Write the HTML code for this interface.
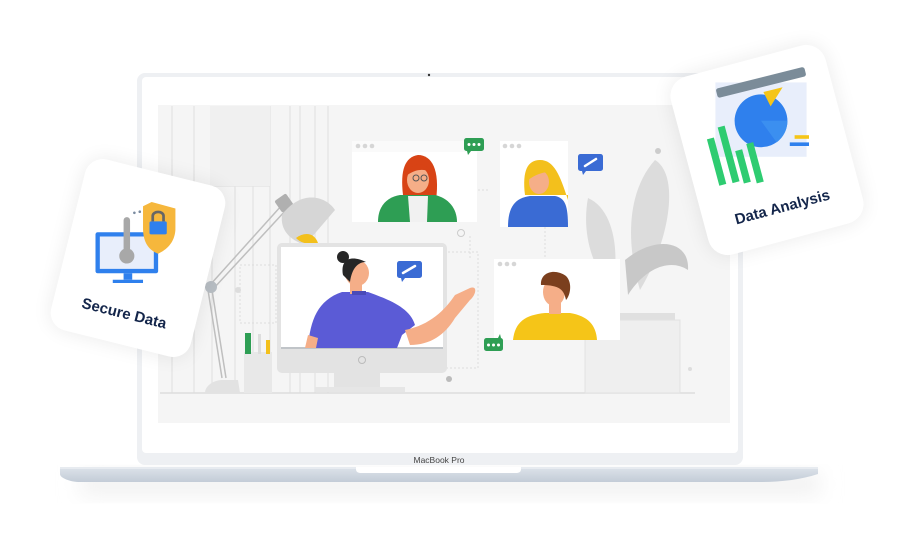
<!DOCTYPE html>
<html><head><meta charset="utf-8"><style>
html,body{margin:0;padding:0;background:#fff;width:902px;height:550px;overflow:hidden}
svg{display:block}
text{font-family:"Liberation Sans",sans-serif}
</style></head><body>
<svg width="902" height="550" viewBox="0 0 902 550" xmlns="http://www.w3.org/2000/svg">
<defs>
<filter id="sh" x="-30%" y="-30%" width="160%" height="160%"><feGaussianBlur stdDeviation="10"/></filter>
<linearGradient id="base" x1="0" y1="0" x2="0" y2="1"><stop offset="0" stop-color="#dde3ea"/><stop offset="1" stop-color="#c3ccd7"/></linearGradient>
</defs>
<rect x="80" y="472" width="740" height="24" fill="#f2f2f2" filter="url(#sh)"/>
<rect x="137" y="73" width="606" height="392" rx="8" fill="#eef0f3"/>
<rect x="142" y="77" width="596" height="376" rx="4" fill="#fff"/>
<circle cx="429" cy="75" r="1.2" fill="#333"/>
<rect x="158" y="105" width="572" height="318" fill="#f5f5f5"/>
<g stroke="#e2e2e2" stroke-width="1.2" fill="none">
<line x1="172" y1="106" x2="172" y2="393"/><line x1="194" y1="106" x2="194" y2="393"/>
<line x1="212" y1="106" x2="212" y2="393"/><line x1="235" y1="106" x2="235" y2="393"/>
<line x1="253" y1="106" x2="253" y2="393"/><line x1="270" y1="106" x2="270" y2="393"/>
<line x1="290" y1="106" x2="290" y2="393"/><line x1="300" y1="106" x2="300" y2="393"/>
<line x1="315" y1="106" x2="315" y2="393"/><line x1="328" y1="106" x2="328" y2="393"/>
<line x1="210" y1="186" x2="270" y2="186"/>
</g>
<rect x="210" y="106" width="60" height="80" fill="#f0f0f0"/>
<line x1="160" y1="393" x2="695" y2="393" stroke="#ddd" stroke-width="1.5"/>
<g stroke="#ddd" stroke-dasharray="2 2" fill="none">
<rect x="412" y="252" width="66" height="116"/>
<rect x="240" y="265" width="36" height="58"/>
<path d="M470 236 V258"/><path d="M545 227 V259"/><path d="M478 190 H490"/>
<path d="M430 175 V145"/>
</g>
<circle cx="461" cy="233" r="3.5" fill="none" stroke="#ccc"/>
<circle cx="658" cy="151" r="3" fill="#ccc"/>
<circle cx="238" cy="290" r="3" fill="#ddd"/>
<circle cx="449" cy="379" r="3" fill="#bbb"/>
<circle cx="592" cy="352" r="2" fill="#ccc"/>
<circle cx="690" cy="369" r="2" fill="#ddd"/>
<g fill="#dcdcdc">
<path d="M655 160 C680 175 670 240 640 290 C625 240 628 190 655 160Z"/>
<path d="M588 198 C615 210 620 255 612 290 C590 265 582 230 588 198Z"/>
<path d="M625 260 C655 235 690 240 688 270 C670 258 645 268 628 295Z" fill="#c8c8c8"/>
</g>
<rect x="620" y="313" width="55" height="8" fill="#e0e0e0"/>
<rect x="585" y="320" width="95" height="73" fill="#efefef" stroke="#e2e2e2"/>
<g stroke="#bfbfbf" stroke-width="1.5" fill="none">
<line x1="210" y1="285" x2="282" y2="205"/><line x1="214" y1="288" x2="286" y2="210"/>
<line x1="208" y1="290" x2="222" y2="378"/><line x1="212" y1="290" x2="226" y2="378"/>
</g>
<circle cx="211" cy="287" r="6" fill="#b8bec4"/>
<rect x="277" y="196" width="14" height="14" rx="2" fill="#b0b0b0" transform="rotate(-35 284 203)"/>
<path d="M282 215 C300 190 325 195 335 210 L305 245 C290 240 280 230 282 215Z" fill="#d6d6d6"/>
<path d="M296 238 C304 232 314 232 318 243 C310 245 302 244 296 238Z" fill="#f3c01c"/>
<path d="M205 393 C205 385 215 380 222 380 L238 380 L240 393Z" fill="#e2e2e2"/>
<rect x="244" y="352" width="28" height="41" fill="#e8e8e8"/>
<rect x="245" y="333" width="6" height="21" fill="#2e9e54"/>
<rect x="258" y="334" width="3" height="20" fill="#ddd"/>
<rect x="266" y="340" width="4" height="14" fill="#f3c01c"/>
<rect x="277" y="243" width="170" height="130" rx="5" fill="#e3e3e3"/>
<rect x="281" y="247" width="162" height="101" fill="#fff"/>
<rect x="281" y="347" width="162" height="2" fill="#c0c4c8"/>
<circle cx="362" cy="360" r="3.5" fill="none" stroke="#bbb"/>
<rect x="334" y="373" width="46" height="14" fill="#e3e3e3"/>
<rect x="315" y="387" width="90" height="5" fill="#e6e6e6"/>
<path d="M308 348 C310 320 318 300 342 292 L368 292 C390 300 410 308 415 325 L402 335 L397 348Z" fill="#5b5bd6"/>
<path d="M405 330 C430 325 445 310 455 295 L470 288 C478 285 476 295 470 300 L455 318 C445 335 430 345 410 345Z" fill="#f5ae88"/>
<path d="M305 348 L308 335 L318 338 L316 348Z" fill="#f5ae88"/>
<rect x="350" y="282" width="12" height="12" fill="#f5ae88"/>
<ellipse cx="357" cy="273" rx="12" ry="13" fill="#f5ae88"/>
<path d="M343 275 C340 258 352 255 366 262 C358 262 352 268 350 282Z" fill="#262626"/>
<circle cx="343" cy="257" r="6" fill="#262626"/>
<rect x="352" y="291" width="14" height="4" fill="#4a4ab8"/>
<rect x="397" y="261" width="25" height="17" rx="2.5" fill="#3a6bd4"/><path d="M401 278 L402 282 L405 278Z" fill="#3a6bd4"/>
<line x1="403" y1="273" x2="415" y2="266" stroke="#fff" stroke-width="2.5" stroke-linecap="round"/>
<rect x="352" y="141" width="125" height="81" fill="#fff"/>
<rect x="352" y="141" width="125" height="11" fill="#fafafa"/>
<circle cx="358" cy="146" r="2.3" fill="#d6d6d6"/><circle cx="365" cy="146" r="2.3" fill="#d6d6d6"/><circle cx="372" cy="146" r="2.3" fill="#d6d6d6"/>
<path d="M403 195 C400 170 405 157 418 155 C432 155 440 170 436 200 Z" fill="#d84315"/>
<path d="M378 222 C378 205 388 197 400 195 L435 195 C448 198 457 208 457 222Z" fill="#2e9e54"/>
<path d="M408 196 L428 196 L427 222 L410 222Z" fill="#f1f1f1"/>
<ellipse cx="418" cy="180" rx="11" ry="13" fill="#f5ae88"/>
<path d="M406 176 C408 163 426 160 431 172 C422 168 414 170 406 176Z" fill="#d84315"/>
<circle cx="416" cy="178" r="3" fill="none" stroke="#555"/><circle cx="424" cy="178" r="3" fill="none" stroke="#555"/>
<rect x="464" y="138" width="20" height="13" rx="2.5" fill="#2e9e54"/><path d="M467 151 L468 155 L471 151Z" fill="#2e9e54"/>
<circle cx="469" cy="144.5" r="1.5" fill="#fff"/><circle cx="474" cy="144.5" r="1.5" fill="#fff"/><circle cx="479" cy="144.5" r="1.5" fill="#fff"/>
<rect x="500" y="141" width="68" height="86" fill="#fff"/>
<circle cx="505" cy="146" r="2.3" fill="#d6d6d6"/><circle cx="512" cy="146" r="2.3" fill="#d6d6d6"/><circle cx="519" cy="146" r="2.3" fill="#d6d6d6"/>
<path d="M525 195 C522 170 528 160 540 160 C554 160 560 175 568 200 L568 195Z" fill="#f3c01c"/>
<path d="M508 227 C508 207 515 198 530 196 L555 196 C565 198 568 205 568 227Z" fill="#3a6bd4"/>
<ellipse cx="539" cy="182" rx="10" ry="12" fill="#f5ae88"/>
<path d="M528 180 C528 168 540 162 550 172 C542 172 535 175 528 180Z" fill="#f3c01c"/>
<rect x="578" y="154" width="25" height="17" rx="2.5" fill="#3a6bd4"/><path d="M582 171 L583 175 L586 171Z" fill="#3a6bd4"/>
<line x1="585" y1="166" x2="596" y2="159" stroke="#fff" stroke-width="2.5" stroke-linecap="round"/>
<rect x="494" y="259" width="126" height="81" fill="#fff"/>
<circle cx="500" cy="264" r="2.3" fill="#d6d6d6"/><circle cx="507" cy="264" r="2.3" fill="#d6d6d6"/><circle cx="514" cy="264" r="2.3" fill="#d6d6d6"/>
<path d="M513 340 C515 322 525 315 545 313 L570 313 C588 316 596 325 597 340Z" fill="#f5c518"/>
<rect x="549" y="302" width="12" height="12" fill="#f5ae88"/>
<ellipse cx="554" cy="292" rx="11" ry="14" fill="#f5ae88"/>
<path d="M541 285 C540 272 555 268 566 276 C573 283 570 296 566 300 C564 290 560 285 541 285Z" fill="#7b3f1e"/>
<rect x="484" y="338" width="19" height="13" rx="2.5" fill="#2e9e54"/><path d="M498 338 L500 334 L501 338Z" fill="#2e9e54"/>
<circle cx="488.5" cy="345" r="1.5" fill="#fff"/><circle cx="493.5" cy="345" r="1.5" fill="#fff"/><circle cx="498.5" cy="345" r="1.5" fill="#fff"/>
<path d="M60 467 H818 V474 C800 480 780 482 760 482 H80 C70 482 60 478 60 474Z" fill="url(#base)"/>
<rect x="60" y="467" width="758" height="2" fill="#e7ebf0"/>
<path d="M356 467 H521 V469 C521 472 519 473 516 473 H361 C358 473 356 472 356 469Z" fill="#fff"/>
<text x="439" y="463" font-size="8.5" fill="#444" text-anchor="middle">MacBook Pro</text>

<g transform="translate(138 258) rotate(14)">
<rect x="-72" y="-88" width="144" height="176" rx="18" fill="#000" opacity="0.08" filter="url(#sh)"/>
<rect x="-72" y="-88" width="144" height="176" rx="18" fill="#fff"/>
<g transform="translate(-4 -10) rotate(-14) scale(1.08)">
<rect x="-38" y="-14" width="58" height="38" rx="2" fill="#2f80ed"/>
<rect x="-34" y="-10" width="50" height="30" fill="#e8eefb"/>
<rect x="-12" y="24" width="8" height="6" fill="#2f80ed"/><rect x="-22" y="30" width="28" height="3" fill="#2f80ed"/>
<rect x="-12" y="-28" width="6" height="32" rx="3" fill="#a8a8a8"/><circle cx="-9" cy="8" r="7" fill="#a8a8a8"/>
<circle cx="-2" cy="-32" r="1.2" fill="#7a8ba0"/><circle cx="3" cy="-33" r="1.2" fill="#7a8ba0"/><circle cx="8" cy="-34" r="1.2" fill="#7a8ba0"/>
<path d="M14 -42 L36 -36 L36 -16 C35 -4 28 2 20 6 C10 2 6 -6 6 -18 L6 -38Z" fill="#f6b73c"/>
<rect x="12" y="-24" width="16" height="12" rx="1.5" fill="#2f80ed"/>
<path d="M15 -24 V-29 C15 -34 25 -34 25 -29 V-24" fill="none" stroke="#666" stroke-width="2.5"/>
</g>
<text x="0" y="62" font-size="15" font-weight="bold" fill="#13254a" text-anchor="middle">Secure Data</text>
</g>

<g transform="translate(767 150) rotate(-15)">
<rect x="-80" y="-92" width="160" height="184" rx="20" fill="#000" opacity="0.08" filter="url(#sh)"/>
<rect x="-80" y="-92" width="160" height="184" rx="20" fill="#fff"/>
<g transform="rotate(15) translate(-6 -22) scale(1.2)">
<rect x="-38" y="-38" width="76" height="62" fill="#e8eefb"/>
<rect x="-38" y="-42" width="76" height="8" rx="2" fill="#7b8c99" transform="rotate(-14 0 -38)"/>
<circle cx="0" cy="-6" r="22" fill="#2f80ed"/>
<path d="M0 -6 L22 -6 A22 22 0 0 1 13 12Z" fill="#3b8ff0"/>
<path d="M2 -30 L18 -34 L8 -18Z" fill="#f5c518"/>
<rect x="28" y="6" width="12" height="3" fill="#f5c518"/><rect x="24" y="12" width="16" height="3" fill="#2f80ed"/>
<rect x="-40" y="8" width="6" height="40" fill="#2ecc71" transform="rotate(-15 -37 28)"/>
<rect x="-30" y="-2" width="6" height="48" fill="#2ecc71" transform="rotate(-15 -27 22)"/>
<rect x="-18" y="18" width="6" height="28" fill="#2ecc71" transform="rotate(-15 -15 32)"/>
<rect x="-8" y="12" width="6" height="34" fill="#2ecc71" transform="rotate(-15 -5 29)"/>
</g>
<text x="0" y="64" font-size="15" font-weight="bold" fill="#13254a" text-anchor="middle">Data Analysis</text>
</g>
</svg>
</body></html>
